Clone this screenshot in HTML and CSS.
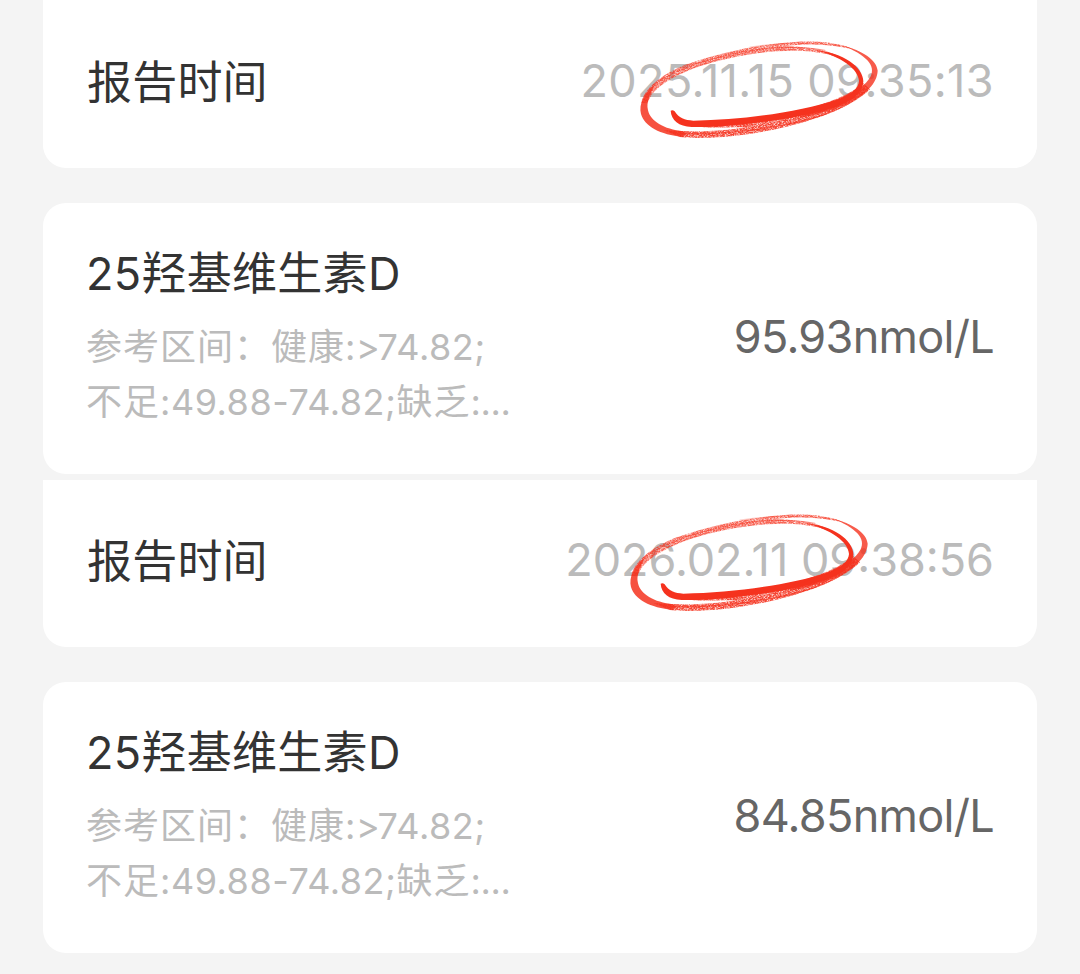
FILE: index.html
```
<!DOCTYPE html>
<html lang="zh-CN">
<head>
  <meta charset="UTF-8" />
  <meta name="viewport" content="width=device-width, initial-scale=1.0"/>
  <title>检验报告</title>

  <link rel="stylesheet" href="styles.css">
</head>
<body>

  <!-- Shared marker circle -->
  <svg class="defs" width="0" height="0">
    <defs>
      <filter id="grain" x="-5%" y="-5%" width="110%" height="110%">
        <feTurbulence type="fractalNoise" baseFrequency="0.2 0.45" numOctaves="2" seed="4" result="noise"/>
        <feColorMatrix in="noise" type="matrix" values="0 0 0 0 0  0 0 0 0 0  0 0 0 0 0  2 0 0 0 -0.25" result="mask"/>
        <feComposite in="SourceGraphic" in2="mask" operator="in"/>
      </filter>
      <symbol id="marker" viewBox="0 0 990 360">
        <g fill="#f5321e" filter="url(#grain)">
          <path opacity=".75" d="M214 218C225 168 290 126 350 103C440 72 540 48 630 40C720 29 800 34 850 58C780 42 710 40 640 49C720 50 790 61 830 94C770 62 690 60 620 64C540 69 450 87 375 114C310 138 245 174 233 220Z"/>
          <path opacity=".9" d="M280 300C380 308 450 304 530 292C470 292 420 294 390 290C510 284 640 258 730 231C800 210 850 187 880 160L900 178C850 227 750 267 650 290C540 316 420 330 330 321Z"/>
        </g>
        <g fill="none" stroke="#f5321e" stroke-linecap="round">
          <path stroke-width="3" opacity=".5" d="M248 165C330 110 430 82 520 65C610 49 700 48 765 61"/>
          <path stroke-width="2" opacity=".35" d="M265 165C350 110 460 79 560 62M540 51C650 34 750 38 830 50"/>
          <path stroke-width="4" opacity=".6" d="M300 307C400 318 520 306 620 289C730 270 830 235 885 186"/>
        </g>
        <g fill="#f5321e">
          <path d="M302 242Q308 238 314 244C326 264 344 271 370 272C520 270 690 245 800 209C845 194 866 174 867 153C865 118 815 79 735 61C820 68 879 111 880 154C879 187 850 212 796 231C735 251 650 267 600 273C510 285 440 293 365 291C326 289 304 271 302 242Z"/>
          <path d="M260 158C220 190 206 223 213 252C224 289 269 314 340 321Q350 313 340 304C281 298 241 273 234 241C228 214 240 187 260 158Z" opacity=".85"/>
          <path d="M815 46C880 62 920 91 923 122C921 162 887 191 835 219C795 239 735 255 690 264L700 246C790 223 873 191 902 139C918 108 889 74 815 46Z" opacity=".8"/>
        </g>
      </symbol>
    </defs>
  </svg>

  <div class="report">
    <div class="card time-card">
      <span class="label">报告时间</span>
      <span class="time time-first">2025.11.15 09:35:13</span>
      <svg class="marker marker-first"><use href="#marker"/></svg>
    </div>
    <div class="card result-card">
      <div class="item">
        <div class="name">25羟基维生素D</div>
        <div class="range">参考区间：健康<span class="num">:&gt;74.82;</span><br>不足<span class="num">:49.88-74.82;</span>缺乏<span class="dots">:...</span></div>
      </div>
      <div class="value">95.93nmol/L</div>
    </div>
  </div>

  <div class="report">
    <div class="card time-card">
      <span class="label">报告时间</span>
      <span class="time">2026.02.11 09:38:56</span>
      <svg class="marker marker-second"><use href="#marker"/></svg>
    </div>
    <div class="card result-card">
      <div class="item">
        <div class="name">25羟基维生素D</div>
        <div class="range">参考区间：健康<span class="num">:&gt;74.82;</span><br>不足<span class="num">:49.88-74.82;</span>缺乏<span class="dots">:...</span></div>
      </div>
      <div class="value">84.85nmol/L</div>
    </div>
  </div>

</body>
</html>
```
FILE: styles.css
```
* {
  box-sizing: border-box;
}

body {
  margin: 0;
  padding: 1px 43px 0;
  height: 974px;
  overflow: hidden;
  background: #f4f4f4;
  font-family: Inter, 'Noto Sans CJK SC', sans-serif;
  color: #333;
}

.defs {
  position: absolute;
}

.report {
  margin-bottom: 6px;
}

.card {
  display: flex;
  justify-content: space-between;
  background: #fff;
  border-radius: 23px;
}

.time-card {
  position: relative;
  height: 166.5px;
  padding: 50px 43px 0 44px;
  margin-bottom: 35.5px;
  border-radius: 0 0 23px 23px;
}

.report:first-of-type .time-card {
  box-shadow: 0 -1px #fff;
}

.label,
.time {
  font-size: 45px;
  line-height: 60px;
  white-space: nowrap;
}

.label {
  padding-top: 2px;
  letter-spacing: 0.2px;
}

.time {
  color: #bbb;
}

.time-first {
  letter-spacing: 0.4px;
}

.marker {
  position: absolute;
  width: 330px;
  height: 120px;
}

.marker-first {
  left: 527px;
  top: 29px;
}

.marker-second {
  left: 516.5px;
  top: 23.3px;
}

.result-card {
  height: 271px;
  padding: 41px 43px 0;
}

.name {
  font-size: 45px;
  line-height: 60px;
  letter-spacing: 0.3px;
  white-space: nowrap;
}

.range {
  margin-top: 16px;
  font-size: 36px;
  line-height: 55px;
  letter-spacing: 1px;
  color: #bbb;
  white-space: nowrap;
}

.num {
  letter-spacing: 0.5px;
}

.dots {
  letter-spacing: -0.3px;
}

.value {
  margin-top: 63px;
  font-size: 45px;
  line-height: 60px;
  letter-spacing: -0.7px;
  color: #666;
  white-space: nowrap;
}
```
